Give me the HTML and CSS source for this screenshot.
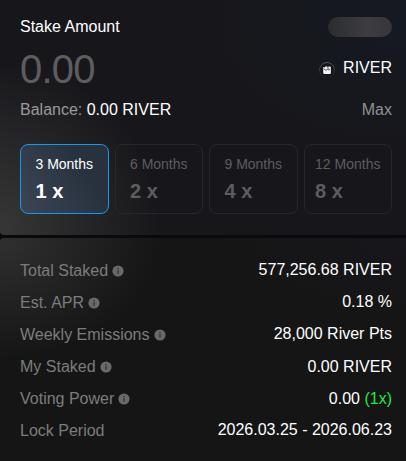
FILE: index.html
```
<!DOCTYPE html>
<html lang="en">
  <head>
    <meta charset="UTF-8" />
    <meta name="viewport" content="width=device-width, initial-scale=1.0" />
    <title>Stake RIVER</title>
    <link rel="stylesheet" href="styles.css">
  </head>
  <body>
    <svg class="sprite" width="0" height="0">
      <symbol id="info" viewBox="0 0 12 12">
        <circle cx="6" cy="6" r="5.6" fill="#696969" />
        <path d="M6 3v1.1M6 4.7v4" stroke="#303030" stroke-width="1.3" />
      </symbol>
    </svg>

    <div class="card stake-card">
      <div class="row title-row">
        <span>Stake Amount</span>
        <span class="skeleton"></span>
      </div>
      <div class="row amount-row">
        <span class="amount">0.00</span>
        <span class="token">
          <svg class="token-icon" viewBox="0 0 16 16">
            <circle cx="8" cy="8" r="7.5" fill="#15161a" stroke="url(#ring)" />
            <defs>
              <linearGradient id="ring" x1="0" y1="0" x2="0" y2="1">
                <stop offset="0" stop-color="#55565a" />
                <stop offset="1" stop-color="#1a1b1f" />
              </linearGradient>
            </defs>
            <path d="M4.1 5.1l1.6.4 1-1.2 1.5.4 3.3-.3.4 1.2v5.7l-.8.8H5.1l-.9-.9z" fill="#f2f2f2" />
            <path d="M4.4 6.6l2.4 1.6 1.7-.8 1.5.5 1.3-.9M8 5.8l2 .3" fill="none" stroke="#33343a" stroke-width=".8" />
          </svg>
          RIVER
        </span>
      </div>
      <div class="row balance-row">
        <span><span class="muted">Balance:</span> 0.00 RIVER</span>
        <span class="max">Max</span>
      </div>
      <div class="periods">
        <div class="period active">
          <div><p>3 Months</p><strong>1 x</strong></div>
        </div>
        <div class="period">
          <div><p>6 Months</p><strong>2 x</strong></div>
        </div>
        <div class="period">
          <div><p>9 Months</p><strong>4 x</strong></div>
        </div>
        <div class="period">
          <div><p>12 Months</p><strong>8 x</strong></div>
        </div>
      </div>
    </div>

    <div class="card info-card">
      <div class="row info-row">
        <span class="label">Total Staked <svg class="info"><use href="#info" /></svg></span>
        <span class="value raised">577,256.68 RIVER</span>
      </div>
      <div class="row info-row">
        <span class="label">Est. APR <svg class="info"><use href="#info" /></svg></span>
        <span class="value raised">0.18 %</span>
      </div>
      <div class="row info-row">
        <span class="label">Weekly Emissions <svg class="info"><use href="#info" /></svg></span>
        <span class="value raised">28,000 River Pts</span>
      </div>
      <div class="row info-row">
        <span class="label">My Staked <svg class="info"><use href="#info" /></svg></span>
        <span class="value">0.00 RIVER</span>
      </div>
      <div class="row info-row">
        <span class="label">Voting Power <svg class="info"><use href="#info" /></svg></span>
        <span class="value">0.00 <span class="boost">(1x)</span></span>
      </div>
      <div class="row info-row">
        <span class="label">Lock Period</span>
        <span class="value raised">2026.03.25 - 2026.06.23</span>
      </div>
    </div>
  </body>
</html>
```

FILE: styles.css
```
* {
  box-sizing: border-box;
}
body {
  font-family: "Liberation Sans", Arial, sans-serif;
  font-size: 16px;
  line-height: 20px;
  margin: 0;
  height: 461px;
  display: flex;
  flex-direction: column;
  gap: 3px;
  overflow: hidden;
  background-color: #0a0a0d;
  color: #fff;
}
p {
  margin: 0;
}
.sprite {
  display: none;
}
.card {
  padding: 0 14px 0 20px;
}
.stake-card {
  height: 235px;
  padding-top: 17px;
  border-radius: 0 0 0 4px;
  background:
    radial-gradient(ellipse 160px 165px at 0 225px, #363636, rgba(54, 54, 54, 0)),
    radial-gradient(ellipse 200px 130px at 100% 20px, #151922, rgba(21, 25, 34, 0)),
    #17171b;
}
.info-card {
  flex: 1;
  padding-top: 17px;
  border-radius: 4px 0 0 0;
  background:
    radial-gradient(ellipse 160px 120px at 0 0, #303030, rgba(48, 48, 48, 0)),
    radial-gradient(ellipse 200px 90px at 100% 0, #17171c, rgba(23, 23, 28, 0)),
    #151515;
}
.row {
  display: flex;
  justify-content: space-between;
  align-items: center;
}
.title-row {
  height: 20px;
}
.skeleton {
  width: 64px;
  height: 20px;
  border-radius: 10px;
  background: linear-gradient(90deg, #2b2c30, #3d3d41 60%, #36373b);
}

/* Amount input and token */
.amount-row {
  height: 48px;
  margin-top: 8px;
}
.amount {
  font-size: 40px;
  line-height: 48px;
  letter-spacing: -0.8px;
  color: #5d5d5f;
}
.token {
  display: flex;
  align-items: center;
  gap: 8px;
  margin-bottom: 2px;
}
.token-icon {
  width: 16px;
  height: 16px;
  margin-top: 3px;
}
.balance-row {
  height: 20px;
  margin-top: 7px;
}
.muted {
  color: #99999b;
}
.max {
  color: #909092;
}

/* Lock period picker */
.periods {
  display: grid;
  grid-template-columns: repeat(4, 1fr);
  gap: 6px;
  margin-top: 24px;
}
.period {
  display: flex;
  justify-content: center;
  height: 70px;
  padding-top: 9px;
  border: 1px solid #26282c;
  border-radius: 8px;
  color: #5d5d60;
}
.period p {
  font-size: 14px;
  line-height: 20px;
}
.period strong {
  display: block;
  margin-top: 5px;
  font-size: 20px;
  line-height: 24px;
}
.active {
  border-color: #0c9cf2;
  background: linear-gradient(60deg, #3d4554, #28323f 70%);
  color: #fff;
}

/* Pool details */
.info-row {
  height: 32px;
}
.label {
  display: flex;
  align-items: center;
  gap: 4px;
  color: #7c7c7c;
}
.info {
  width: 12px;
  height: 12px;
}
.raised {
  margin-bottom: 2px;
}
.boost {
  color: #1fea43;
}
```
